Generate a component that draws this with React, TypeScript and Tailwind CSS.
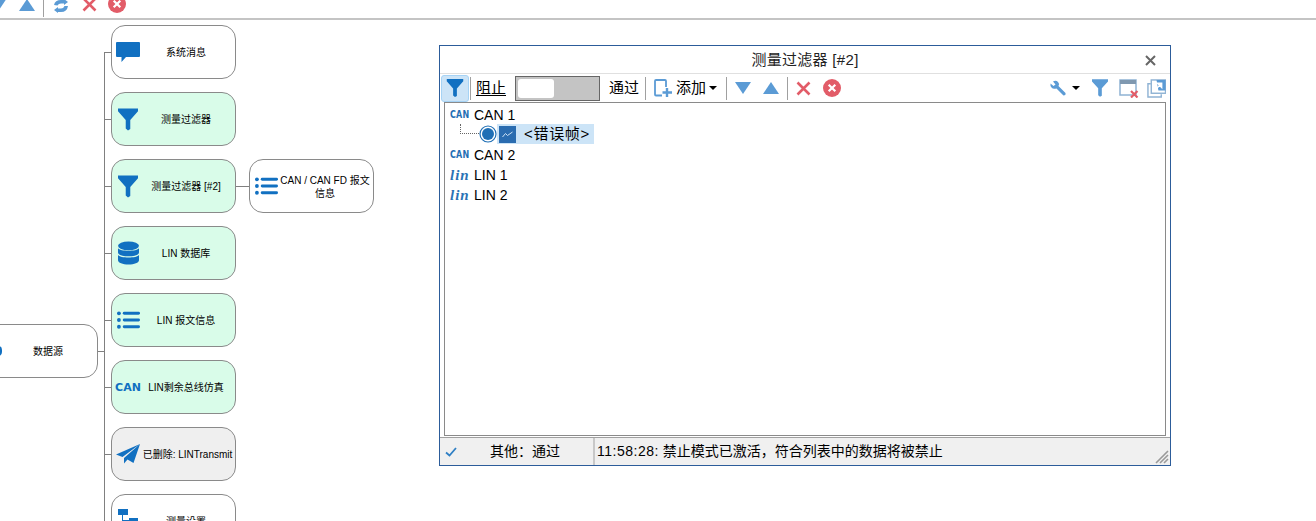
const cjk = "font-['Liberation_Sans','Noto_Sans_CJK_SC',sans-serif]"

function Funnel({ className = '', color = '#1170c1' }: { className?: string; color?: string }) {
  return (
    <svg viewBox="0 0 22 24" className={className}>
      <path d="M0 0H22V3L13.5 12.5V22.5L11 24L8.5 22V12.5L0 3Z" fill={color} />
    </svg>
  )
}

function ListIcon() {
  return (
    <svg viewBox="0 0 24 20" className="w-[23px] h-[20px]">
      <g fill="#1170c1">
        <circle cx="2" cy="3" r="2" />
        <rect x="6" y="1.5" width="18" height="3" rx="1.5" />
        <circle cx="2" cy="10" r="2" />
        <rect x="6" y="8.5" width="18" height="3" rx="1.5" />
        <circle cx="2" cy="17" r="2" />
        <rect x="6" y="15.5" width="18" height="3" rx="1.5" />
      </g>
    </svg>
  )
}

function ChatIcon() {
  return (
    <svg viewBox="0 0 24 20" className="w-[24px] h-[20px]">
      <path d="M1 0H23Q24 0 24 1V14Q24 15 23 15H10L5.5 20V15H1Q0 15 0 14V1Q0 0 1 0Z" fill="#1170c1" />
    </svg>
  )
}

function DbIcon() {
  return (
    <svg viewBox="0 0 22 24" className="w-[21px] h-[24px]">
      <g fill="#1170c1">
        <ellipse cx="11" cy="4.5" rx="11" ry="4.5" />
        <path d="M0 7C2 10.5 20 10.5 22 7V11.5C22 14 17 15.5 11 15.5S0 14 0 11.5Z" />
        <path d="M0 14C2 17.5 20 17.5 22 14V19.5C22 22 17 24 11 24S0 22 0 19.5Z" />
      </g>
    </svg>
  )
}

function PlaneIcon() {
  return (
    <svg viewBox="0 0 24 20" className="w-[24px] h-[20px]">
      <path d="M24 0L0 10.5L6.5 13ZM24 0L8 14V19.5L11.5 15.5L17.5 19Z" fill="#1170c1" />
    </svg>
  )
}

function TreeIcon() {
  return (
    <svg viewBox="0 0 20 24" className="w-[20px] h-[24px]">
      <g fill="#1170c1">
        <rect x="0" y="0" width="10" height="6" />
        <rect x="11" y="9" width="9" height="6" />
        <rect x="11" y="18" width="9" height="6" />
        <rect x="4" y="6" width="1" height="15" />
        <rect x="4" y="11" width="7" height="1" />
        <rect x="4" y="20" width="7" height="1" />
      </g>
    </svg>
  )
}

function TriDown() {
  return (
    <svg viewBox="0 0 16 12" className="w-[16px] h-[12px]">
      <path d="M0 0H16L8 12Z" fill="#5b9bd5" />
    </svg>
  )
}

function TriUp() {
  return (
    <svg viewBox="0 0 16 12" className="w-[16px] h-[12px]">
      <path d="M0 12H16L8 0Z" fill="#5b9bd5" />
    </svg>
  )
}

function RedX({ size = 'w-[15px] h-[15px]' }: { size?: string }) {
  return (
    <svg viewBox="0 0 15 15" className={size}>
      <path d="M1.5 1.5L13.5 13.5M13.5 1.5L1.5 13.5" stroke="#e25c68" strokeWidth="2.6" />
    </svg>
  )
}

function RedCircle({ size = 'w-[18px] h-[18px]' }: { size?: string }) {
  return (
    <svg viewBox="0 0 18 18" className={size}>
      <circle cx="9" cy="9" r="9" fill="#e25c68" />
      <path d="M5.7 5.7L12.3 12.3M12.3 5.7L5.7 12.3" stroke="#fff" strokeWidth="2.2" />
    </svg>
  )
}

function Caret() {
  return <span className="w-0 h-0 border-x-[4px] border-x-transparent border-t-[4px] border-t-black" />
}

function Sep({ className = '' }: { className?: string }) {
  return <span className={`w-px h-[23px] bg-[#a0a0a0] ${className}`} />
}

function CanMark() {
  return (
    <span className="w-[19px] text-[8px] leading-none font-black tracking-[0.2px] scale-y-[1.25] text-[#1f6fb5] font-['DejaVu_Sans',sans-serif]">
      CAN
    </span>
  )
}

function LinMark() {
  return (
    <span className="w-[19px] text-[15px] leading-none font-bold italic tracking-[1px] text-[#2a72b5] font-['Liberation_Serif',serif]">
      lin
    </span>
  )
}

function TreeRow({ mark, label }: { mark: React.ReactNode; label: string }) {
  return (
    <div className="h-5 flex items-center gap-[5px] pl-[5px]">
      {mark}
      <span className="text-[14px] text-black">{label}</span>
    </div>
  )
}

function FilterWindow() {
  return (
    <div className={`absolute left-[439px] top-[45px] w-[732px] h-[421px] bg-white border border-[#2c5c9a] flex flex-col ${cjk}`}>
      <div className="h-[28px] shrink-0 flex items-center justify-center relative border-b border-[#e0e0e0]">
        <span className="mt-[2px] text-[15px] tracking-[0.3px] text-[#222]">测量过滤器 [#2]</span>
        <svg viewBox="0 0 11 11" className="absolute right-[14px] top-[9px] w-[11px] h-[11px]">
          <path d="M1 1L10 10M10 1L1 10" stroke="#666" strokeWidth="2" />
        </svg>
      </div>

      <div className="h-[28px] shrink-0 flex items-center pl-[1px] pr-[4px] text-[15px] text-black">
        <div className="w-[28px] h-[27px] flex items-center justify-center bg-[#cce4f7] border border-[#a6d3f5] rounded-[3px]">
          <Funnel className="w-[18px] h-[18px]" />
        </div>
        <Sep className="ml-[1px]" />
        <span className="ml-[5px] underline underline-offset-2">阻止</span>
        <div className="ml-[9px] w-[85px] h-[25px] bg-[#c4c4c4] border border-[#666] p-[2px]">
          <div className="w-[36px] h-[19px] bg-white rounded-[3px]" />
        </div>
        <span className="ml-[9px]">通过</span>
        <Sep className="ml-[6px]" />
        <svg viewBox="0 0 18 18" className="ml-[8px] w-[18px] h-[18px]">
          <path d="M8 16.5H2Q1 16.5 1 15.5V2Q1 1 2 1H11Q12 1 12 2V8" fill="none" stroke="#5b9bd5" strokeWidth="1.8" />
          <path d="M13 9V18M8.5 13.5H18" stroke="#5b9bd5" strokeWidth="2.4" />
        </svg>
        <span className="ml-[4px]">添加</span>
        <span className="ml-[3px] flex"><Caret /></span>
        <Sep className="ml-[9px]" />
        <span className="ml-[8px] flex"><TriDown /></span>
        <span className="ml-[12px] flex"><TriUp /></span>
        <Sep className="ml-[8px]" />
        <span className="ml-[8px] flex"><RedX /></span>
        <span className="ml-[12px] flex"><RedCircle /></span>

        <div className="ml-auto flex items-center">
          <svg viewBox="0 0 16 16" className="w-[16px] h-[16px]">
            <path d="M0.5 3.5L3.5 6L5.5 4.5L3 1.5Q6 0 8 2T8.5 6L15.5 13Q16 15.5 13.5 15.5L6.5 8.5Q3 9.5 1.5 7.5T0.5 3.5Z" fill="#5b9bd5" />
          </svg>
          <span className="ml-[6px] flex"><Caret /></span>
          <Funnel className="ml-[12px] w-[16px] h-[18px]" color="#5b9bd5" />
          <svg viewBox="0 0 20 20" className="ml-[11px] w-[20px] h-[20px]">
            <rect x="1" y="2" width="16" height="15" fill="none" stroke="#8fb3d4" strokeWidth="1.5" />
            <rect x="1" y="2" width="16" height="4" fill="#7f98b0" />
            <path d="M12 13L18.5 19.5M18.5 13L12 19.5" stroke="#e25c68" strokeWidth="2.2" />
          </svg>
          <svg viewBox="0 0 20 20" className="ml-[8px] w-[19px] h-[19px]">
            <path d="M4 5H1V19H15V16" fill="none" stroke="#8fb3d4" strokeWidth="1.5" />
            <rect x="4.5" y="1" width="15" height="14" fill="none" stroke="#8fb3d4" strokeWidth="1.5" />
            <path d="M10 1H19.5V12H12Z" fill="#5b9bd5" />
            <path d="M9 11L14 6M11 4.5H15.5V9Z" stroke="#fff" strokeWidth="1.4" fill="#fff" />
          </svg>
        </div>
      </div>

      <div className="mx-[4px] h-[334px] shrink-0 border border-[#8a8a8a] pt-[2px]">
        <TreeRow mark={<CanMark />} label="CAN 1" />
        <div className="h-5 pb-[2px] flex items-center pl-[15px]">
          <span className="w-[19px] h-[10px] -mt-[10px] border-l border-b border-dotted border-[#666]" />
          <svg viewBox="0 0 18 18" className="w-[18px] h-[18px]">
            <circle cx="9" cy="9" r="8" fill="#fff" stroke="#1f6fb5" strokeWidth="1.2" />
            <circle cx="9" cy="9" r="6" fill="#1f6fb5" />
          </svg>
          <div className="h-[20px] flex items-center bg-[#cce4f7] pl-[2px] pr-[4px]">
            <span className="w-[17px] h-[17px] bg-[#2a6cb0] flex items-center justify-center">
              <svg viewBox="0 0 11 7" className="w-[11px] h-[7px]">
                <path d="M0.5 6L3.5 2.5L5.5 4.5L10.5 1" fill="none" stroke="#cfe3f5" strokeWidth="1" />
              </svg>
            </span>
            <span className="ml-[8px] text-[15px] tracking-[0.7px] text-black">&lt;错误帧&gt;</span>
          </div>
        </div>
        <TreeRow mark={<CanMark />} label="CAN 2" />
        <TreeRow mark={<LinMark />} label="LIN 1" />
        <TreeRow mark={<LinMark />} label="LIN 2" />
      </div>

      <div className="mt-[1px] flex-1 flex bg-[#f0f0f0] border-t border-[#a0a0a0] text-[14px] text-black relative">
        <div className="w-[154px] flex items-center border-r border-[#c8c8c8]">
          <svg viewBox="0 0 12 10" className="ml-[5px] w-[12px] h-[10px]">
            <path d="M1 5.5L4.5 8.5L11 1" fill="none" stroke="#2f7fc4" strokeWidth="1.8" />
          </svg>
          <span className="ml-[33px]">其他：通过</span>
        </div>
        <div className="flex-1 flex items-center pl-[2px] border-l border-[#c8c8c8]">
          <span className="tracking-[0.5px]">11:58:28:</span>
          <span className="ml-[4px]">禁止模式已激活，符合列表中的数据将被禁止</span>
        </div>
        <svg viewBox="0 0 14 14" className="absolute right-[1px] bottom-[1px] w-[14px] h-[14px]">
          <path d="M13 1L1 13M13 5L5 13M13 9L9 13" stroke="#999" strokeWidth="1.6" />
        </svg>
      </div>
    </div>
  )
}

function Node({ left, top, bg = 'bg-white', icon, label, labelPad = 'pr-[4px]' }: {
  left: string; top: string; bg?: string; icon: React.ReactNode; label: string; labelPad?: string
}) {
  return (
    <div className={`absolute ${left} ${top} w-[125px] h-[54px] rounded-[14px] border border-[#8a8a8a] flex items-center pl-[3px] ${bg}`}>
      <span className="w-[26px] shrink-0 flex items-center justify-center">{icon}</span>
      <span className={`flex-1 pt-[1px] text-center text-[10px] leading-[13px] text-black ${labelPad} ${cjk}`}>{label}</span>
    </div>
  )
}

export default function App() {
  const green = 'bg-[#d9fce9]'
  return (
    <div className="relative w-[1316px] h-[521px] overflow-hidden bg-white">
      {/* top toolbar, cut off by the window edge */}
      <div className="absolute left-0 top-0 right-0 h-[20px] border-b-2 border-[#c4c4c4] overflow-hidden flex items-start">
        <span className="-ml-[9px] -mt-[2px] flex"><TriDown /></span>
        <span className="ml-[12px] -mt-[1px] flex"><TriUp /></span>
        <span className="ml-[8px] w-px h-[17px] bg-[#a0a0a0]" />
        <svg viewBox="0 0 16 14" className="ml-[9px] -mt-[1px] w-[16px] h-[14px]">
          <path d="M1 6Q2 1 8 1H11V0L15 3L11 6V4.5H8Q5.5 4.5 4.5 6.5Z" fill="#5b9bd5" />
          <path d="M15 7Q14 13 8 13H5V14L1 11L5 8V9.5H8Q10.5 9.5 11.5 7Z" fill="#5b9bd5" />
        </svg>
        <span className="ml-[13px] -mt-[3px] flex"><RedX /></span>
        <span className="ml-[11px] -mt-[5px] flex"><RedCircle /></span>
      </div>

      {/* connectors of the mind map */}
      <div className="absolute left-[98px] top-[351px] w-[6px] h-px bg-[#808080]" />
      <div className="absolute left-[104px] top-[52px] w-px h-[469px] bg-[#808080]" />
      {[52, 119, 186, 253, 320, 387, 454, 521].map(y => (
        <div key={y} className="absolute left-[104px] w-[7px] h-px bg-[#808080]" style={{ top: y }} />
      ))}
      <div className="absolute left-[236px] top-[186px] w-[13px] h-px bg-[#808080]" />

      <Node left="left-[-27px]" top="top-[324px]" icon={<span />} label="数据源" />
      <div className="absolute -left-[6px] top-[346px] w-[8px] h-[10px] rounded-full border-2 border-[#1170c1]" />

      <Node left="left-[111px]" top="top-[25px]" icon={<ChatIcon />} label="系统消息" />
      <Node left="left-[111px]" top="top-[92px]" bg={green} icon={<Funnel className="w-[20px] h-[23px]" />} label="测量过滤器" />
      <Node left="left-[111px]" top="top-[159px]" bg={green} icon={<Funnel className="w-[20px] h-[23px]" />} label="测量过滤器 [#2]" />
      <Node left="left-[111px]" top="top-[226px]" bg={green} icon={<DbIcon />} label="LIN 数据库" />
      <Node left="left-[111px]" top="top-[293px]" bg={green} icon={<ListIcon />} label="LIN 报文信息" />
      <Node
        left="left-[111px]"
        top="top-[360px]"
        bg={green}
        icon={<span className="text-[11px] leading-none font-black text-[#1170c1] font-['DejaVu_Sans',sans-serif]">CAN</span>}
        label="LIN剩余总线仿真"
      />
      <Node left="left-[111px]" top="top-[427px]" bg="bg-[#efefef]" icon={<PlaneIcon />} label="已删除: LINTransmit" labelPad="pr-[1px]" />
      <Node left="left-[111px]" top="top-[494px]" icon={<TreeIcon />} label="测量设置" />
      <Node left="left-[249px]" top="top-[159px]" icon={<ListIcon />} label="CAN / CAN FD 报文信息" labelPad="pr-[2px]" />

      <FilterWindow />
    </div>
  )
}
